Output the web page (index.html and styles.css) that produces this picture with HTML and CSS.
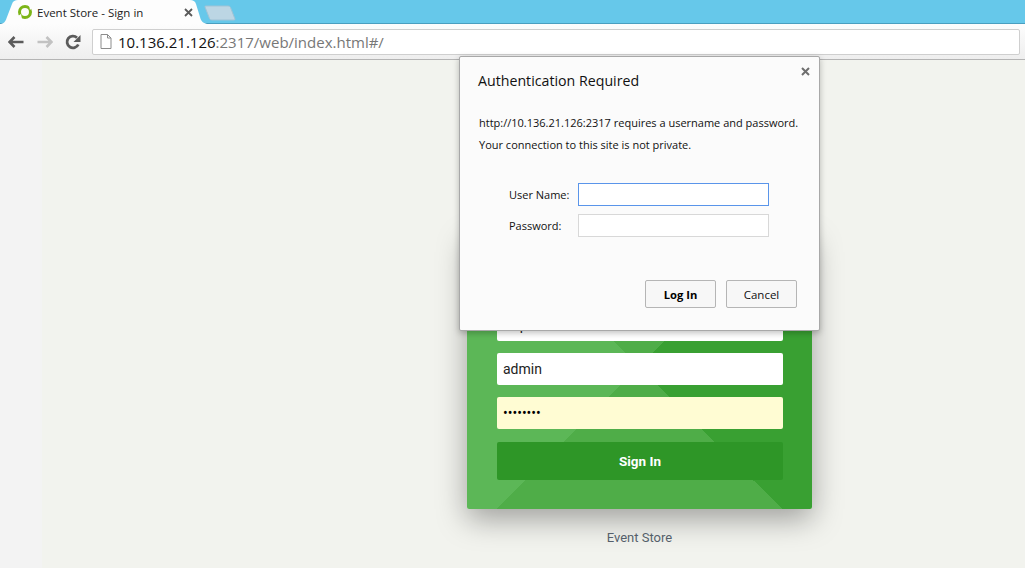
FILE: index.html
```html
<!DOCTYPE html>
<html lang="en">
<head>
    <meta charset="UTF-8">
    <meta name="viewport" content="width=device-width, initial-scale=1.0">
    <title>Event Store - Sign in</title>
    <link rel="stylesheet" href="styles.css">
</head>
<body>
    <header class="browser">
        <div class="tabstrip">
            <div class="tab">
                <svg class="tab-shape" width="206" height="24" viewBox="0 0 206 24">
                    <path d="M0 24 C4 23 5 20 6 17 L11 4 C12 1 14 0 17 0 L189 0 C192 0 194 1 195 4 L199 17 C200 21 202 23 206 24 Z" fill="#fdfdfd"/>
                </svg>
                <svg class="favicon" width="14" height="14" viewBox="0 0 14 14">
                    <circle cx="7" cy="7" r="5.500" fill="none" stroke="#7cb518" stroke-width="3"/>
                    <path d="M11 0 L14 3 L12 5 Z M0 11 L3 9 L4 14 Z" fill="#fdfdfd"/>
                </svg>
                <span class="tab-title">Event Store - Sign in</span>
                <svg class="tab-close" width="9" height="9" viewBox="0 0 9 9">
                    <path d="M1 1 L8 8 M8 1 L1 8" stroke="#5a5a5a" stroke-width="1.800"/>
                </svg>
            </div>
            <svg class="new-tab" width="32" height="16" viewBox="0 0 32 16">
                <path d="M1.500 1 L24 1 C25.500 1 26 1.500 26.500 2.500 L31 14 C31 15 30.500 15 30 15 L8 15 C6.500 15 6 14.500 5.500 13.500 L1 2 C1 1.200 1 1 1.500 1 Z" fill="#bcd6e4" stroke="#9fc3d6"/>
            </svg>
        </div>
        <div class="toolbar">
            <button class="nav-btn" type="button" aria-label="Back">
                <svg width="16" height="12" viewBox="0 0 16 12"><path d="M6.500 1 L1.500 6 L6.500 11 M2 6 L15.500 6" fill="none" stroke="#5b5b5b" stroke-width="2.600"/></svg>
            </button>
            <button class="nav-btn" type="button" aria-label="Forward">
                <svg width="16" height="12" viewBox="0 0 16 12"><path d="M9.500 1 L14.500 6 L9.500 11 M14 6 L0.500 6" fill="none" stroke="#c2c2c2" stroke-width="2.600"/></svg>
            </button>
            <button class="nav-btn nav-btn-last" type="button" aria-label="Reload">
                <svg width="16" height="16" viewBox="0 0 16 16">
                    <path d="M13.300 10.500 A5.900 5.900 0 1 1 12 3.700" fill="none" stroke="#5b5b5b" stroke-width="2.800"/>
                    <path d="M15.500 1 L15.500 8 L8.500 8 Z" fill="#5b5b5b"/>
                </svg>
            </button>
            <div class="omnibox">
                <svg class="page-icon" width="12" height="15" viewBox="0 0 12 15">
                    <path d="M1 0.500 L7.500 0.500 L11 4 L11 14.500 L1 14.500 Z M7.500 0.500 L7.500 4 L11 4" fill="#fff" stroke="#8c8c8c"/>
                </svg>
                <span class="url"><span class="url-host">10.136.21.126</span>:2317/web/index.html#/</span>
            </div>
        </div>
    </header>

    <main class="page">
        <form class="login-card">
            <input class="login-input" type="text" value="http://10.136.21.126:2317">
            <input class="login-input" type="text" value="admin">
            <input class="login-input login-input-filled" type="password" value="changeit">
            <button class="login-btn" type="button">Sign In</button>
        </form>
        <p class="login-footer">Event Store</p>
    </main>

    <div class="auth-dialog">
        <svg class="auth-close" width="9" height="9" viewBox="0 0 9 9">
            <path d="M1 1 L8 8 M8 1 L1 8" stroke="#6e6e6e" stroke-width="2"/>
        </svg>
        <h1 class="auth-title">Authentication Required</h1>
        <p class="auth-text">http://10.136.21.126:2317 requires a username and password.</p>
        <p class="auth-text">Your connection to this site is not private.</p>
        <div class="auth-fields">
            <label class="auth-label" for="authUser">User Name:</label>
            <input class="auth-input auth-input-focus" id="authUser" type="text">
            <label class="auth-label" for="authPass">Password:</label>
            <input class="auth-input" id="authPass" type="password">
        </div>
        <div class="auth-buttons">
            <button class="auth-btn auth-btn-default" type="button">Log In</button>
            <button class="auth-btn" type="button">Cancel</button>
        </div>
    </div>
</body>
</html>
```

FILE: styles.css
```css
body {
    margin: 0;
    height: 568px;
    overflow: hidden;
    font-family: 'Roboto', Arial, sans-serif;
    background: linear-gradient(to right, #f3f3f3 0, #f3f3f3 42px, #f2f3ee 42px);
}

.browser {
    height: 60px;
    box-sizing: border-box;
    border-bottom: 1px solid #b4b4b4;
}

.tabstrip {
    display: flex;
    height: 24px;
    box-sizing: border-box;
    padding-left: 1px;
    background: #66c8ea;
    box-shadow: inset 0 -1px 0 #4a9fc0;
}

.tab {
    position: relative;
    display: flex;
    align-items: center;
    width: 206px;
    height: 24px;
    box-sizing: border-box;
    padding: 0 14px 0 17px;
}

.tab-shape {
    position: absolute;
    left: 0;
    top: 0;
}

.favicon,
.tab-title,
.tab-close {
    position: relative;
}

.tab-title {
    margin-left: 5px;
    flex: 1;
    font-family: 'Open Sans', Arial, sans-serif;
    font-size: 11.500px;
    color: #222;
    white-space: nowrap;
}

.new-tab {
    margin: 5px 0 0 -3px;
}

.toolbar {
    display: flex;
    align-items: center;
    height: 35px;
    box-sizing: border-box;
    padding: 0 5px 0 8px;
    background: linear-gradient(#fdfdfd, #eeeeee);
}

.nav-btn {
    display: flex;
    align-items: center;
    justify-content: center;
    width: 16px;
    height: 16px;
    margin-right: 13px;
    padding: 0;
    border: none;
    background: none;
}

.nav-btn-last {
    margin-left: -1px;
    margin-right: 11px;
}

.omnibox {
    display: flex;
    align-items: center;
    flex: 1;
    height: 26px;
    box-sizing: border-box;
    padding-left: 7px;
    background: #fff;
    border: 1px solid #cfcfcf;
    border-radius: 2px;
}

.url {
    margin-left: 6px;
    font-family: 'Open Sans', Arial, sans-serif;
    font-size: 15px;
    color: #777;
    white-space: nowrap;
}

.url-host {
    color: #111;
}

.page {
    padding: 172px 0 0 467px;
}

.login-card {
    display: flex;
    flex-direction: column;
    width: 345px;
    height: 277px;
    box-sizing: border-box;
    padding: 77px 29px 29px 30px;
    border-radius: 2px;
    background: conic-gradient(from -45deg at 172px 134px, #4fad48 0 90deg, #39a032 90deg 180deg, #4fad48 180deg 270deg, #5cb757 270deg 360deg);
    box-shadow: 0 10px 30px rgba(0, 0, 0, 0.35);
}

.login-input {
    height: 32px;
    box-sizing: border-box;
    margin-bottom: 12px;
    padding: 0 6px;
    border: none;
    border-radius: 2px;
    background: #fff;
    font-family: 'Roboto', Arial, sans-serif;
    font-size: 14px;
    color: #222;
}

.login-input-filled {
    margin-bottom: 13px;
    background: #fffcd3;
    color: #000;
}

.login-btn {
    height: 38px;
    padding: 0;
    border: none;
    border-radius: 2px;
    background: #2e9627;
    font-family: 'Roboto', Arial, sans-serif;
    font-size: 13.500px;
    font-weight: 700;
    color: #fff;
}

.login-footer {
    width: 345px;
    margin: 21px 0 0;
    text-align: center;
    font-size: 13px;
    line-height: 15px;
    color: #555f6b;
}

.auth-dialog {
    position: absolute;
    left: 459px;
    top: 56px;
    width: 361px;
    height: 275px;
    box-sizing: border-box;
    padding: 14px 22px 0 18px;
    background: #fbfbfb;
    border: 1px solid #a8a8a8;
    border-radius: 2px;
    box-shadow: 0 2px 6px rgba(0, 0, 0, 0.25);
    font-family: 'Open Sans', Arial, sans-serif;
    color: #111;
}

.auth-close {
    position: absolute;
    right: 9px;
    top: 10px;
}

.auth-title {
    margin: 0 0 23px;
    font-size: 14.200px;
    font-weight: 400;
    line-height: 20px;
}

.auth-text {
    margin: 0 0 5px;
    padding-left: 1px;
    font-size: 11px;
    line-height: 17px;
    white-space: nowrap;
}

.auth-fields {
    display: grid;
    grid-template-columns: 69px 191px;
    grid-auto-rows: 23px;
    row-gap: 8px;
    align-items: center;
    margin: 30px 0 0 31px;
}

.auth-label {
    font-size: 11px;
}

.auth-input {
    height: 23px;
    box-sizing: border-box;
    padding: 0 4px;
    border: 1px solid #d8d8d8;
    background: #fff;
}

.auth-input-focus {
    border-color: #5a95ea;
}

.auth-buttons {
    display: flex;
    justify-content: flex-end;
    gap: 10px;
    margin-top: 43px;
}

.auth-btn {
    width: 71px;
    height: 28px;
    padding: 0;
    border: 1px solid #b5b5b5;
    border-radius: 2px;
    background: #f7f7f7;
    font-family: 'Open Sans', Arial, sans-serif;
    font-size: 11.500px;
    color: #111;
}

.auth-btn-default {
    font-size: 11.200px;
    font-weight: 700;
    color: #000;
}
```
